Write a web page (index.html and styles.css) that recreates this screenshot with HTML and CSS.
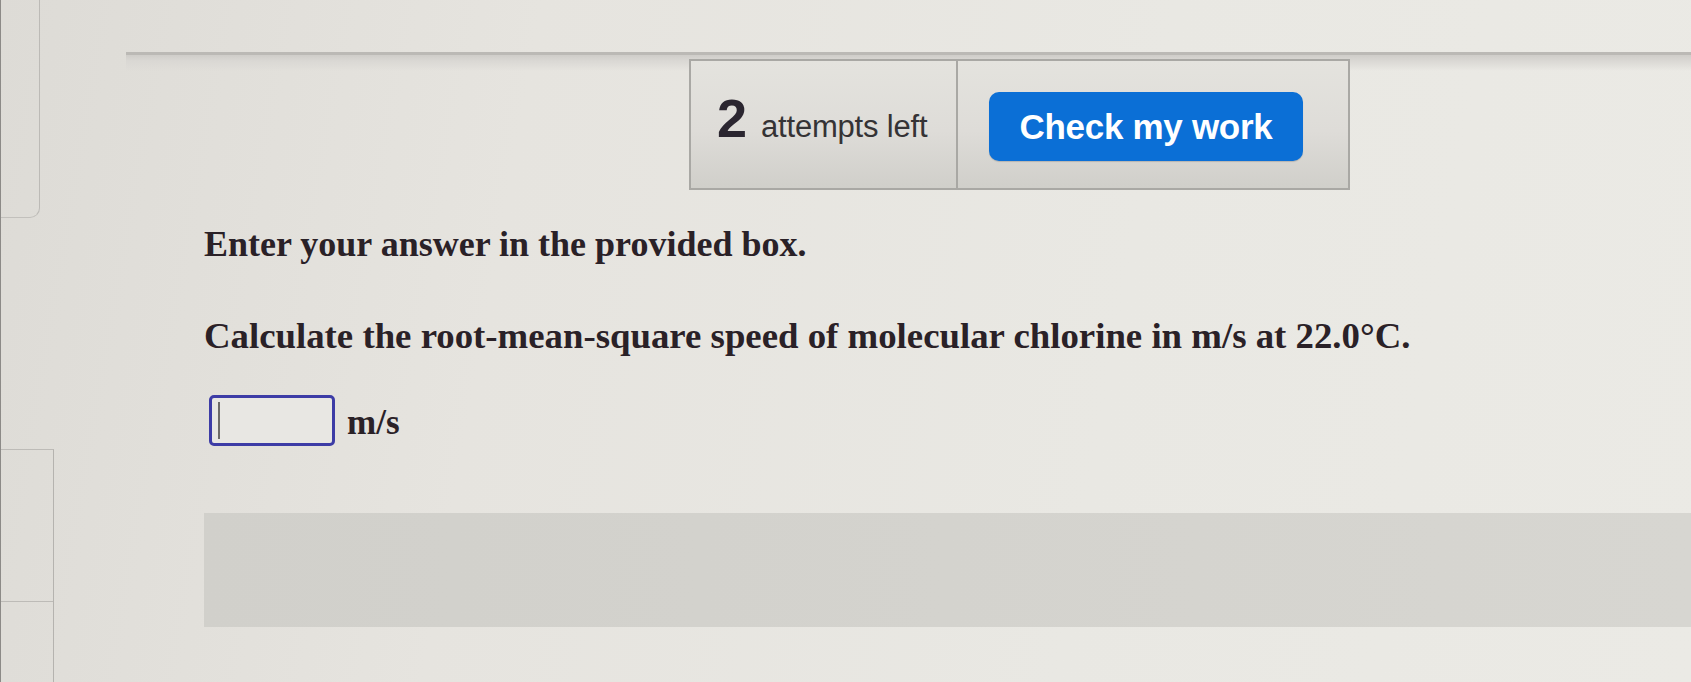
FILE: index.html
```html
<!DOCTYPE html>
<html lang="en">
<head>
<meta charset="utf-8">
<title>Question</title>
<link rel="stylesheet" href="styles.css">
</head>
<body>
<div class="page">
  <aside class="rail">
    <div class="rail-top"></div>
    <div class="rail-bottom">
      <div class="rail-cell"></div>
      <div class="rail-cell"></div>
    </div>
  </aside>
  <main class="panel">
    <div class="toolbar">
      <div class="attempts"><span class="count">2</span><span class="label">attempts left</span></div>
      <div class="check-cell"><button class="check-btn" type="button">Check my work</button></div>
    </div>
    <section class="question">
      <p class="prompt">Enter your answer in the provided box.</p>
      <p class="prompt second">Calculate the root-mean-square speed of molecular chlorine in m/s at 22.0°C.</p>
      <div class="answer-row">
        <span class="field"><input class="answer" type="text" aria-label="answer"><span class="caret"></span></span>
        <span class="unit">m/s</span>
      </div>
    </section>
    <div class="feedback"></div>
  </main>
</div>
</body>
</html>
```
FILE: styles.css
```css
html, body {
  margin: 0;
  padding: 0;
}
body {
  width: 1691px;
  height: 682px;
  overflow: hidden;
  background: linear-gradient(100deg, #dddbd6 0%, #e6e4df 30%, #e9e8e3 65%, #ebeae5 100%);
  border-left: 1px solid #8c8a87;
  box-sizing: border-box;
}
.page {
  display: flex;
  height: 682px;
}
.rail {
  width: 53px;
  flex: none;
  display: flex;
  flex-direction: column;
}
.rail-top {
  width: 38px;
  height: 217px;
  border-right: 1.5px solid #bcbab6;
  border-bottom: 1.5px solid #c2c0bc;
  border-bottom-right-radius: 10px;
}
.rail-bottom {
  margin-top: 231px;
  border-top: 1.5px solid #bdbbb7;
  border-right: 1.5px solid #b5b3af;
  flex: 1;
  display: flex;
  flex-direction: column;
}
.rail-cell {
  height: 151px;
  border-bottom: 1.5px solid #bdbbb7;
}
.rail-cell + .rail-cell {
  border-bottom: none;
  flex: 1;
}
.panel {
  flex: 1;
  margin-left: 72px;
  margin-top: 52px;
  border-top: 3px solid #bbb9b5;
  background: linear-gradient(#cfcdc9 0px, #dad8d4 6px, rgba(230,228,223,0) 16px);
  display: flex;
  flex-direction: column;
}
.toolbar {
  margin-left: 563px;
  margin-top: 4px;
  width: 661px;
  height: 131px;
  box-sizing: border-box;
  border: 2px solid #a9a8a4;
  display: flex;
  background: linear-gradient(#e4e3de 0%, #dedcd8 55%, #d0cfca 100%);
}
.attempts {
  width: 267px;
  box-sizing: border-box;
  border-right: 2px solid #a9a8a4;
  display: flex;
  align-items: baseline;
  padding-left: 26px;
  padding-top: 26px;
  font-family: "Liberation Sans", Arial, sans-serif;
  color: #2c2a2c;
}
.count {
  font-size: 54px;
  font-weight: bold;
  color: #2b2630;
  margin-right: 14px;
}
.label {
  font-size: 31px;
  color: #353335;
  letter-spacing: -0.2px;
}
.check-cell {
  flex: 1;
  padding-left: 31px;
  padding-top: 31px;
}
.check-btn {
  width: 314px;
  height: 69px;
  border: none;
  border-radius: 10px;
  background: #0b6fd6;
  color: #ffffff;
  font-family: "Liberation Sans", Arial, sans-serif;
  font-weight: bold;
  font-size: 35px;
  letter-spacing: -0.3px;
  padding: 0;
  box-shadow: 0 1px 1px rgba(0,0,0,0.15);
}
.question {
  padding-left: 78px;
  margin-top: 33px;
  font-family: "Liberation Serif", "Times New Roman", serif;
  font-weight: bold;
  color: #2a2127;
}
.prompt {
  margin: 0;
  font-size: 36px;
  line-height: 43px;
}
.prompt.second {
  margin-top: 48px;
  font-size: 36.8px;
}
.answer-row {
  margin-top: 38px;
  display: flex;
  align-items: center;
  gap: 12px;
}
.field {
  position: relative;
  display: inline-block;
  margin-left: 5px;
}
.answer {
  display: block;
  width: 126px;
  height: 51px;
  box-sizing: border-box;
  border: 3px solid #3d3ca6;
  border-radius: 5px;
  background: #e8e7e3;
  outline: none;
  margin: 0;
  padding: 0;
}
.caret {
  position: absolute;
  left: 9px;
  top: 7px;
  width: 2px;
  height: 37px;
  background: #6d6b68;
}
.unit {
  font-size: 35px;
  font-weight: bold;
  margin-top: 4px;
}
.feedback {
  margin-left: 78px;
  margin-top: 67px;
  height: 114px;
  background: linear-gradient(90deg, #d1d0cb 0%, #d4d3ce 50%, #d7d6d1 100%);
}
```
